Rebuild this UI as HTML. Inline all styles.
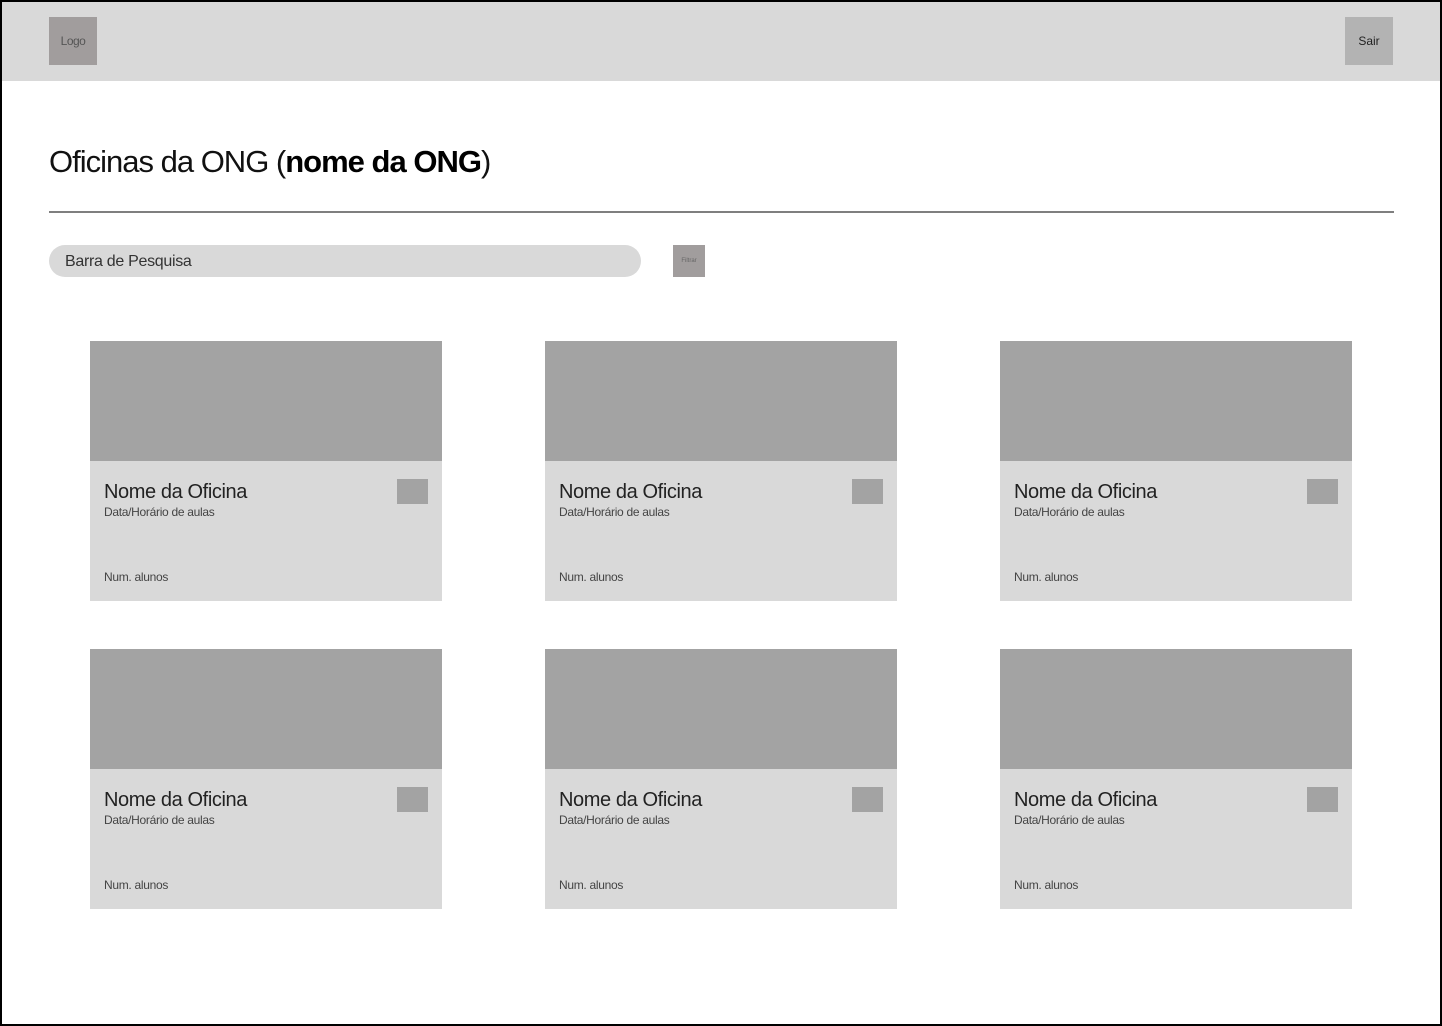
<!DOCTYPE html>
<html><head><style>
*{margin:0;padding:0;box-sizing:border-box}
body{width:1442px;height:1026px;position:relative;background:#fff;font-family:"Liberation Sans",sans-serif;overflow:hidden}
.frame{position:absolute;left:0;top:0;width:1442px;height:1026px;border:2px solid #000;pointer-events:none;z-index:5}
.hdr{position:absolute;left:0;top:0;width:1442px;height:81px;background:#d9d9d9}
.logo{position:absolute;left:49px;top:17px;width:48px;height:48px;background:#a19d9d;color:#555;font-size:12px;display:flex;align-items:center;justify-content:center;letter-spacing:-0.5px}
.sair{position:absolute;left:1345px;top:17px;width:48px;height:48px;background:#b3b3b3;color:#222;font-size:12px;display:flex;align-items:center;justify-content:center}
h1{position:absolute;left:49px;top:144px;font-size:31px;font-weight:300;color:#111;white-space:nowrap;letter-spacing:-1px}
h1 b{font-weight:700;color:#000}
.line{position:absolute;left:49px;top:211px;width:1345px;height:2px;background:#7f7f7f}
.search{position:absolute;left:49px;top:245px;width:592px;height:32px;border-radius:16px;background:#d9d9d9;color:#333;font-size:16px;padding-left:16px;line-height:34px;letter-spacing:-0.3px}
.filt{position:absolute;left:673px;top:245px;width:32px;height:32px;background:#a19d9d;color:#666;font-size:6px;display:flex;align-items:center;justify-content:center}
.card{position:absolute;width:352px;height:260px;background:#d9d9d9}
.card .img{height:120px;background:#a3a3a3}
.card .t{position:absolute;left:14px;top:140px;font-size:20px;color:#222;font-weight:300;letter-spacing:-0.4px}
.card .d{position:absolute;left:14px;top:164px;font-size:12px;color:#444;letter-spacing:-0.3px}
.card .n{position:absolute;left:14px;top:229px;font-size:12px;color:#444;letter-spacing:-0.3px}
.card .sq{position:absolute;left:307px;top:138px;width:31px;height:25px;background:#a3a3a3}
</style></head><body>
<div class="hdr"><div class="logo">Logo</div><div class="sair">Sair</div></div>
<h1>Oficinas da ONG (<b>nome da ONG</b>)</h1>
<div class="line"></div>
<div class="search">Barra de Pesquisa</div>
<div class="filt">Filtrar</div>
<div class="card" style="left:90px;top:341px"><div class="img"></div><div class="t">Nome da Oficina</div><div class="d">Data/Horário de aulas</div><div class="n">Num. alunos</div><div class="sq"></div></div>
<div class="card" style="left:545px;top:341px"><div class="img"></div><div class="t">Nome da Oficina</div><div class="d">Data/Horário de aulas</div><div class="n">Num. alunos</div><div class="sq"></div></div>
<div class="card" style="left:1000px;top:341px"><div class="img"></div><div class="t">Nome da Oficina</div><div class="d">Data/Horário de aulas</div><div class="n">Num. alunos</div><div class="sq"></div></div>
<div class="card" style="left:90px;top:649px"><div class="img"></div><div class="t">Nome da Oficina</div><div class="d">Data/Horário de aulas</div><div class="n">Num. alunos</div><div class="sq"></div></div>
<div class="card" style="left:545px;top:649px"><div class="img"></div><div class="t">Nome da Oficina</div><div class="d">Data/Horário de aulas</div><div class="n">Num. alunos</div><div class="sq"></div></div>
<div class="card" style="left:1000px;top:649px"><div class="img"></div><div class="t">Nome da Oficina</div><div class="d">Data/Horário de aulas</div><div class="n">Num. alunos</div><div class="sq"></div></div>
<div class="frame"></div>
</body></html>
